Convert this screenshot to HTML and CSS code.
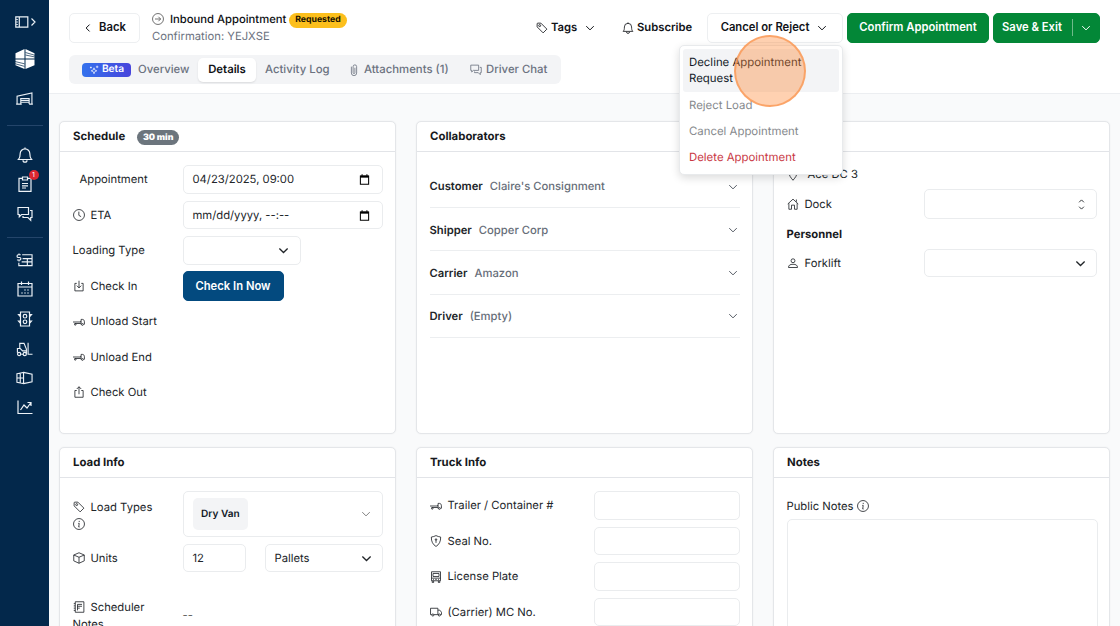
FILE: index.html
```html
<!DOCTYPE html>
<html lang="en">
<head>
<meta charset="utf-8">
<title>Inbound Appointment</title>
<link rel="stylesheet" href="styles.css">
</head>
<body>
<svg class="defs" aria-hidden="true">
  <symbol id="down" viewBox="0 0 16 16"><path d="M2 5 8 11l6-6"/></symbol>
  <symbol id="left" viewBox="0 0 16 16"><path d="M10.500 2.500 5 8l5.500 5.500"/></symbol>
  <symbol id="tag" viewBox="0 0 16 16"><path d="M1.500 2.500v4l8 8 5-5-8-8h-4a1 1 0 0 0-1 1zM6.200 4.800a1.300 1.300 0 1 1-2.600 0 1.300 1.300 0 0 1 2.600 0z"/></symbol>
  <symbol id="bell" viewBox="0 0 16 16"><path d="M8 .5v1.300M1.500 12.500c1.500-1.500 1.700-3 1.700-5.900a4.800 4.800 0 0 1 9.600 0c0 2.900.2 4.400 1.700 5.900zM6 13.200a2 2 0 0 0 4 0"/></symbol>
  <symbol id="chat" viewBox="0 0 16 16"><path d="M1 1.500h10.500v7H4.500L2.300 10.700V8.500H1zM13 4.500h2v7h-1.300v2.700l-2.700-2.700H6v-1.500"/></symbol>
  <symbol id="clip" viewBox="0 0 16 16"><path d="M4.500 3.500v8.500a3.500 3.500 0 0 0 7 0V3.500a2.300 2.300 0 0 0-4.700 0v8a1.200 1.200 0 0 0 2.400 0V5"/></symbol>
  <symbol id="arrow" viewBox="0 0 16 16"><circle cx="8" cy="8" r="7.300"/><path d="M4 8h7.500M8.500 5l3 3-3 3"/></symbol>
  <symbol id="clock" viewBox="0 0 16 16"><circle cx="8" cy="8" r="7.300"/><path d="M7.800 3.500v5l3 1.700"/></symbol>
  <symbol id="info" viewBox="0 0 16 16"><circle cx="8" cy="8" r="7.300"/><path d="M8.300 3.800v1.600M7 7.200h1.300L7.600 12h1.200"/></symbol>
  <symbol id="cal" viewBox="0 0 16 16"><path d="M2 3h12v12H2z"/><path d="M2 3.800h12" stroke-width="3"/><path d="M4.500.5v2M11.500.5v2"/></symbol>
  <symbol id="checkin" viewBox="0 0 16 16"><path d="M5 4.500H2.500v10h11v-10H11M8 1v9.500M5 7.500l3 3 3-3"/></symbol>
  <symbol id="checkout" viewBox="0 0 16 16"><path d="M5 6H2.500v9h11V6H11M8 11V1M5 4l3-3 3 3"/></symbol>
  <symbol id="trailer" viewBox="0 0 16 16"><path d="M0 8h10.500M2 10h8.500M10.800 11.500V4.500h1.700c1.800 0 2.700 1.500 2.700 3.200v3.300h-1M10.500 7.500l-1-.5"/><circle cx="3" cy="11.300" r="1"/><circle cx="12.600" cy="11.300" r="1.200"/></symbol>
  <symbol id="truck" viewBox="0 0 16 16"><path d="M2.500 11.500H.7V3h9.800v8.500H5.200M10.500 5.500h2.500l2.300 2.800v3.200h-1.500M10.500 11.500h.7"/><circle cx="3.800" cy="12" r="1.400"/><circle cx="12.500" cy="12" r="1.400"/></symbol>
  <symbol id="shield" viewBox="0 0 16 16"><path d="M8 .8c2 1 4 1.600 6.200 1.900C14.500 8.500 12 13 8 15.300 4 13 1.500 8.500 1.800 2.700 4 2.400 6 1.800 8 .8z"/><path d="M8 6v4.500"/><circle cx="8" cy="6" r="1"/></symbol>
  <symbol id="bus" viewBox="0 0 16 16"><path d="M2 1h12v12H2zM2 9.500h12M4 3.300h8v4H4zM3 13v2.500h1.800V13M11.200 13v2.500H13V13M4 11.200h1.200M7 11.200h2M10.800 11.200H12"/></symbol>
  <symbol id="box" viewBox="0 0 16 16"><path d="M8 1 15 4v7.800L8 15l-7-3.200V4zM1 4l7 3 7-3M8 7v8"/></symbol>
  <symbol id="journal" viewBox="0 0 16 16"><path d="M3 1h11.500v14H3zM1 3.500h2M1 6.500h2M1 9.500h2M1 12.500h2M6 4.500h6M6 7h6M6 9.500h3M6 4.500v8"/></symbol>
  <symbol id="house" viewBox="0 0 16 16"><path d="M1 8 8 1.500 15 8M2.500 7v8h3.500V9.500h4V15h3.500V7M12.500 5V2"/></symbol>
  <symbol id="person" viewBox="0 0 16 16"><circle cx="8" cy="5" r="2.600"/><path d="M2 14c0-3 2-4.300 6-4.300s6 1.300 6 4.300z"/></symbol>
  <symbol id="pin" viewBox="0 0 16 16"><path d="M8 15C4.500 11 3 8.500 3 6a5 5 0 0 1 10 0c0 2.500-1.500 5-5 9z"/></symbol>
  <symbol id="updown" viewBox="0 0 16 16"><path d="M4.500 4.800 8 1.300l3.500 3.500M4.500 11.200 8 14.700l3.500-3.500"/></symbol>
  <symbol id="spark" viewBox="0 0 16 16"><path d="M8 4.500 9.300 8l3.200 1.300-3.200 1.200L8 14l-1.300-3.500-3.200-1.200L6.700 8zM13 1v4M11 3h4M3 2.500v3M1.500 4h3"/></symbol>
</svg>

<div class="app">
  <nav class="sidebar">
    <svg class="s-toggle" viewBox="0 0 21 12"><path d="M.8.800h12v10.400h-12zM4.300 1v10M16.500 2.500 20 6l-3.500 3.500"/><path d="M1 3.500h2M1 6h2M1 8.500h2" stroke-width=".8"/></svg>
    <svg class="s-logo" viewBox="0 0 20 20"><path d="M9.500 0v9.500H.5V4.200zM9.500 10.500V20l-9-3.700v-5.800zM10.500 0l9 4.200v5.300h-9zM10.500 10.500h9v5.800l-9 3.700z"/><path class="cut" d="M10.500 3.500 20 6.300M10.500 6 20 8M0 12.500l9.500 2.300M0 14.700l9.500 2.700"/></svg>
    <svg class="s-warehouse" viewBox="0 0 18 14"><path d="M1 13V4.500L17 1v12M5 13V7h9v6M5 9h9M5 11h9M0 13h6M14 13h4"/></svg>
    <hr>
    <svg class="s-bell" viewBox="0 0 16 16"><use href="#bell"/></svg>
    <div class="s-board"><svg viewBox="0 0 16 16"><path d="M5 2.300H2v13h12v-13h-3M5.500 1h5v3h-5zM5 7.500h6M5 9.800h6M5 12h4"/></svg><span>1</span></div>
    <svg class="s-chat" viewBox="0 0 16 16"><use href="#chat"/></svg>
    <hr>
    <svg class="s-i1" viewBox="0 0 18 16"><path d="M6.500 2.500H17v11.500H3v-3M7 6.500h10M6 10h11M12 6.500V14M5 2.500H2.500a1.200 1.200 0 0 0 0 2.800h1.300a1.300 1.300 0 0 1 0 2.700H1M3.200 1v1.500M3.200 8v1.500"/></svg>
    <svg class="s-i2" viewBox="0 0 16 16"><path d="M1 2.500h14V15H1zM1 6h14M4.500.5v3.500M11.500.5v3.500"/><path d="M7.500 9h1M10.500 9h1M4.500 12h1M7.500 12h1M10.500 12h1" stroke-width="1.600"/></svg>
    <svg class="s-i3" viewBox="0 0 16 16"><path d="M3.500 1h9v14h-9zM3.500 3.500H1.500L3.500 6M12.500 3.500h2L12.500 6M3.500 10h-2l2 2.500M12.500 10h2l-2 2.500"/><circle cx="8" cy="5.200" r="1.800"/><circle cx="8" cy="10.800" r="1.800"/></svg>
    <svg class="s-i4" viewBox="0 0 18 16"><path d="M4 7.500V2h4.500l2.500 6v5M1.500 12V7.500h3L7 10h4M12.800 1.500V13.500H17.500M5.500 13.500h2"/><circle cx="3.300" cy="13.300" r="1.700"/><circle cx="9.300" cy="13.300" r="1.700"/></svg>
    <svg class="s-i5" viewBox="0 0 18 16"><path d="M1 3.500 8 2v12l-7-1.500zM8 2l9 2v8l-9 2M4.500 3v10M1 8h7"/></svg>
    <svg class="s-i6" viewBox="0 0 16 16"><path d="M1 1.500v13h14.500M3.500 11l3.500-5 3 3 4-5.500M10.500 3.500H14V7"/></svg>
  </nav>

  <div class="page">
    <header class="top">
      <div class="bar">
        <button class="btn back"><svg class="ic"><use href="#left"/></svg>Back</button>
        <div class="title">
          <div class="name"><svg class="ic"><use href="#arrow"/></svg><span>Inbound Appointment</span><b class="badge">Requested</b></div>
          <div class="conf">Confirmation: YEJXSE</div>
        </div>
        <div class="actions">
          <span class="act tags"><svg class="ic"><use href="#tag"/></svg>Tags<svg class="ic chev"><use href="#down"/></svg></span>
          <span class="act sub"><svg class="ic"><use href="#bell"/></svg>Subscribe</span>
          <div class="dropdown">
            <button class="btn cancel">Cancel or Reject<svg class="ic"><use href="#down"/></svg></button>
            <div class="menu">
              <div class="item on">Decline Appointment Request</div>
              <div class="item off">Reject Load</div>
              <div class="item off">Cancel Appointment</div>
              <div class="item danger">Delete Appointment</div>
              <i class="pointer"></i>
            </div>
          </div>
          <button class="btn green confirm">Confirm Appointment</button>
          <button class="btn green save">Save &amp; Exit<i></i><svg class="ic"><use href="#down"/></svg></button>
        </div>
      </div>
      <div class="tabs">
        <span class="beta"><svg class="ic"><use href="#spark"/></svg>Beta</span>
        <span class="tab t-over">Overview</span>
        <span class="tab active">Details</span>
        <span class="tab t-log">Activity Log</span>
        <span class="tab t-att"><svg class="ic"><use href="#clip"/></svg>Attachments (1)</span>
        <span class="tab"><svg class="ic"><use href="#chat"/></svg>Driver Chat</span>
      </div>
    </header>

    <main class="grid">
      <section class="card">
        <h2>Schedule <b class="pill">30 min</b></h2>
        <div class="body rows">
          <div class="row"><label class="indent">Appointment</label><div class="field wide date">04/23/2025, 09:00<svg class="ic cal"><use href="#cal"/></svg></div></div>
          <div class="row"><label><svg class="ic"><use href="#clock"/></svg>ETA</label><div class="field wide date">mm/dd/yyyy, --:--<svg class="ic cal"><use href="#cal"/></svg></div></div>
          <div class="row"><label>Loading Type</label><div class="field short"><svg class="ic bold"><use href="#down"/></svg></div></div>
          <div class="row"><label><svg class="ic"><use href="#checkin"/></svg>Check In</label><button class="btn blue">Check In Now</button></div>
          <div class="row"><label><svg class="ic"><use href="#trailer"/></svg>Unload Start</label></div>
          <div class="row"><label><svg class="ic"><use href="#trailer"/></svg>Unload End</label></div>
          <div class="row"><label><svg class="ic"><use href="#checkout"/></svg>Check Out</label></div>
        </div>
      </section>

      <section class="card">
        <h2>Collaborators</h2>
        <div class="body">
          <div class="collab"><b>Customer</b><span>Claire's Consignment</span><svg class="ic"><use href="#down"/></svg></div>
          <div class="collab"><b>Shipper</b><span>Copper Corp</span><svg class="ic"><use href="#down"/></svg></div>
          <div class="collab"><b>Carrier</b><span>Amazon</span><svg class="ic"><use href="#down"/></svg></div>
          <div class="collab"><b>Driver</b><span>(Empty)</span><svg class="ic"><use href="#down"/></svg></div>
        </div>
      </section>

      <section class="card">
        <h2></h2>
        <div class="body loc">
          <div class="site"><svg class="ic"><use href="#pin"/></svg>Ace DC 3</div>
          <div class="row"><label><svg class="ic"><use href="#house"/></svg>Dock</label><div class="field tall"><svg class="ic"><use href="#updown"/></svg></div></div>
          <div class="sub-h">Personnel</div>
          <div class="row"><label><svg class="ic"><use href="#person"/></svg>Forklift</label><div class="field"><svg class="ic bold"><use href="#down"/></svg></div></div>
        </div>
      </section>

      <section class="card">
        <h2>Load Info</h2>
        <div class="body load">
          <div class="row types"><label class="stack"><span><svg class="ic"><use href="#tag"/></svg>Load Types</span><svg class="ic"><use href="#info"/></svg></label><div class="field wide multi"><span class="chip">Dry Van</span><svg class="ic"><use href="#down"/></svg></div></div>
          <div class="row"><label><svg class="ic"><use href="#box"/></svg>Units</label><div class="field qty">12</div><div class="field unit">Pallets<svg class="ic bold"><use href="#down"/></svg></div></div>
          <div class="row notes"><label class="stack"><span><svg class="ic"><use href="#journal"/></svg>Scheduler</span><span>Notes</span></label><span class="empty">--</span></div>
        </div>
      </section>

      <section class="card">
        <h2>Truck Info</h2>
        <div class="body rows truck">
          <div class="row"><label><svg class="ic"><use href="#trailer"/></svg>Trailer / Container #</label><div class="field"></div></div>
          <div class="row"><label><svg class="ic"><use href="#shield"/></svg>Seal No.</label><div class="field"></div></div>
          <div class="row"><label><svg class="ic"><use href="#bus"/></svg>License Plate</label><div class="field"></div></div>
          <div class="row"><label><svg class="ic"><use href="#truck"/></svg>(Carrier) MC No.</label><div class="field"></div></div>
        </div>
      </section>

      <section class="card">
        <h2>Notes</h2>
        <div class="body public">
          <div class="pub">Public Notes<svg class="ic"><use href="#info"/></svg></div>
          <div class="area"></div>
        </div>
      </section>
    </main>
  </div>
</div>
</body>
</html>
```
FILE: styles.css
```css
* { box-sizing: border-box; }
body { margin: 0; height: 626px; overflow: hidden; font: 11.250px/16.4px Inter, "Liberation Sans", sans-serif; color: #212529; background: #f9fafb; text-rendering: geometricPrecision; }
.defs { position: absolute; width: 0; height: 0; }
svg { fill: none; stroke: currentColor; stroke-width: 1.1; flex: none; }
.ic { width: 12px; height: 12px; }
button { font: inherit; margin: 0; }

.app { display: flex; height: 626px; overflow: hidden; }
.sidebar { width: 49px; flex: none; background: #03284b; color: #edf2f7; display: flex; flex-direction: column; align-items: center; padding-top: 16px; }
.sidebar svg { width: 16px; height: 16px; display: block; stroke-width: 1.2; }
.sidebar .s-toggle { width: 21px; height: 12px; margin-left: 1px; }
.sidebar .s-logo { width: 20px; height: 20px; margin-top: 21px; fill: #fff; stroke: none; }
.sidebar .s-logo .cut { stroke: #03284b; stroke-width: .7; fill: none; }
.sidebar .s-warehouse { width: 17px; height: 13px; margin-top: 23px; }
.sidebar hr { width: 36px; height: 1px; border: 0; background: #24456a; margin: 20px 0 0; }
.sidebar .s-bell { margin-top: 21px; }
.s-board { position: relative; margin-top: 13px; }
.s-board span { position: absolute; left: 12px; top: -6px; width: 10px; height: 10px; border-radius: 50%; background: #dc2632; color: #fff; font-size: 7px; line-height: 10px; text-align: center; }
.sidebar .s-chat { margin-top: 14px; }
.sidebar .s-chat + hr { margin-top: 15px; }
.sidebar .s-i1, .sidebar .s-i4, .sidebar .s-i5 { width: 17px; }
.sidebar .s-i1 { margin-top: 14px; }
.sidebar .s-i2, .sidebar .s-i3, .sidebar .s-i4 { margin-top: 14px; }
.sidebar .s-i2, .sidebar .s-i5, .sidebar .s-i6 { margin-top: 13px; }

.page { flex: 1; min-width: 0; }
.top { height: 94px; background: #fff; border-bottom: 1px solid #eceef1; padding: 12px 20px 0; }
.bar { display: flex; height: 31px; align-items: center; }
.btn { display: flex; align-items: center; justify-content: center; height: 30px; padding: 0; border: 1px solid #edeff1; border-radius: 5px; background: #fff; color: #111318; font-weight: 600; white-space: nowrap; }
.btn .ic { width: 10px; height: 10px; stroke-width: 1.6; }
.back { width: 71px; gap: 6px; }
.title { margin-left: 12px; }
.name { display: flex; align-items: center; height: 17px; color: #0c0e12; font-weight: 500; }
.name .ic { margin-right: 6px; color: #555; }
.name span { width: 115px; white-space: nowrap; }
.badge { margin: 2px 0 0 4px; width: 58px; height: 15px; border-radius: 8px; background: #fcbf1c; color: #171000; font-size: 8.700px; line-height: 15px; font-weight: 700; text-align: center; }
.conf { color: #6b7280; height: 17px; line-height: 17px; }
.actions { display: flex; align-items: center; margin-left: auto; }
.act { display: flex; align-items: center; font-weight: 600; color: #111318; gap: 3px; }
.tags { width: 86px; }
.tags .chev { width: 10px; height: 10px; margin-left: 5px; stroke-width: 1.600; }
.sub { width: 85px; }
.dropdown { position: relative; margin-right: 4px; }
.cancel { width: 136px; gap: 8px; padding-right: 2px; }
.green { background: #038737; border-color: #038737; color: #fff; }
.confirm { width: 142px; margin-right: 4px; }
.save { width: 107px; }
.save i { width: 1px; height: 17px; background: #6fba8a; margin: 0 8px 0 10px; }
.menu { position: absolute; z-index: 5; left: -28px; top: 32px; width: 164px; height: 130px; padding: 3px; border: 1px solid #e8eaec; border-radius: 5px; background: #fff; box-shadow: 0 3px 8px rgba(0,0,0,.14); font-size: 11.400px; }
.item { height: 26.400px; padding: 5px 6px; line-height: 16.400px; white-space: nowrap; }
.item.on { height: 43px; background: #f3f4f6; border-radius: 3px; color: #111827; white-space: normal; }
.off { color: #85888c; }
.danger { color: #c93743; }
.pointer { position: absolute; left: 54px; top: -11px; width: 72px; height: 72px; border-radius: 50%; background: rgba(255,133,51,.38); border: 2px solid rgba(249,150,80,.75); }

.tabs { display: inline-flex; align-items: center; width: 492px; height: 29px; margin-top: 12px; padding-left: 13px; border-radius: 6px; background: #f3f4f6; color: #6b7280; font-size: 11.350px; font-weight: 500; white-space: nowrap; }
.beta { display: flex; align-items: center; justify-content: center; gap: 3px; width: 49px; height: 14px; border-radius: 4px; background: linear-gradient(90deg,#3472ed,#4845dc); color: #fff; font-size: 10.200px; font-weight: 600; }
.beta .ic { width: 10px; height: 10px; }
.tab { display: flex; align-items: center; gap: 4px; }
.t-over { width: 60px; margin-left: 7px; }
.tab.active { width: 58px; height: 24px; justify-content: center; border-radius: 5px; background: #fff; color: #101216; font-weight: 600; box-shadow: 0 1px 2px rgba(0,0,0,.1); }
.t-log { width: 83px; margin-left: 9px; }
.t-att { width: 122px; }

.grid { display: grid; grid-template-columns: repeat(3, 337px); grid-template-rows: 313px 313px; gap: 13px 20px; padding: 27px 10px 0; }
.card { background: #fff; border: 1px solid #e4e6e9; border-radius: 5px; box-shadow: 0 0 2px rgba(0,0,0,.06); }
.card h2 { display: flex; align-items: center; height: 30px; margin: 0; padding: 0 13px; border-bottom: 1px solid #e2e4e8; font-size: 11.400px; font-weight: 700; color: #17191d; }
.pill { width: 42px; height: 15px; margin: 2px 0 0 12px; border-radius: 8px; background: #6c757d; color: #fff; font-size: 8.800px; line-height: 15px; text-align: center; }
.body { padding: 13px 12.500px; }
.row { display: flex; align-items: center; }
.rows { display: grid; grid-auto-rows: 28.400px; gap: 7.100px; padding-top: 13.400px; }
.row label { width: 110px; flex: none; display: flex; align-items: center; gap: 6px; white-space: nowrap; }
.row label.indent { padding-left: 7px; }
.field { display: flex; align-items: center; height: 28.400px; padding: 0 9px; border: 1px solid #eaecee; border-radius: 5px; background: #fff; }
.field .ic { margin-left: auto; width: 11px; height: 11px; stroke-width: 1.500; }
.field .bold { stroke-width: 1.900; margin-right: 1px; }
.field .cal { margin-right: 3px; stroke: #000; }
.wide { width: 200px; }
.short { width: 118px; padding-right: 10px; }
.blue { width: 101px; height: 30px; background: #034a7f; border-color: #034a7f; color: #fff; }

.collab { display: flex; align-items: center; height: 43.200px; padding-top: 1px; border-bottom: 1px solid #eceef0; }
.collab b { font-weight: 600; margin-right: 7px; }
.collab span { color: #666d78; font-weight: 500; }
.collab .ic { margin: 0 2px 0 auto; width: 10px; height: 10px; stroke-width: 1.600; color: #555b64; }

.loc .row label { width: 137.500px; }
.loc .field { width: 173px; }
.loc .field.tall { height: 30px; }
.loc .field .ic { margin-right: 1px; }
.loc .field.tall .ic { margin-right: 0; stroke-width: 1.300; }
.site { display: flex; align-items: center; gap: 9px; height: 18px; margin-bottom: 6px; padding-top: 1px; }
.sub-h { font-weight: 700; height: 16px; margin: 7px 0; color: #17191d; }
.truck .row label { width: 164.500px; }
.truck .field { width: 146px; }

.load { display: grid; gap: 7px; }
.types { height: 46px; }
.row label.stack { display: block; }
.stack span { display: flex; align-items: center; gap: 6px; height: 17px; }
.stack > .ic { display: block; margin-top: 2px; }
.types .multi { height: 46px; }
.types .multi .ic { width: 10px; height: 10px; margin-right: 2px; color: #777; }
.chip { padding: 0 8.500px; height: 32px; line-height: 32px; border-radius: 5px; background: #f3f4f6; color: #111827; font-size: 10.100px; font-weight: 600; white-space: nowrap; }
.qty { width: 63px; }
.unit { width: 118px; margin-left: 19px; }
.notes { margin-top: 19px; height: 34px; }
.empty { color: #666; }
.public { padding-top: 20px; }
.pub { display: flex; align-items: center; gap: 3px; height: 16px; }
.area { margin-top: 5px; width: 311px; height: 160px; border: 1px solid #eaecee; border-radius: 5px; }
```
